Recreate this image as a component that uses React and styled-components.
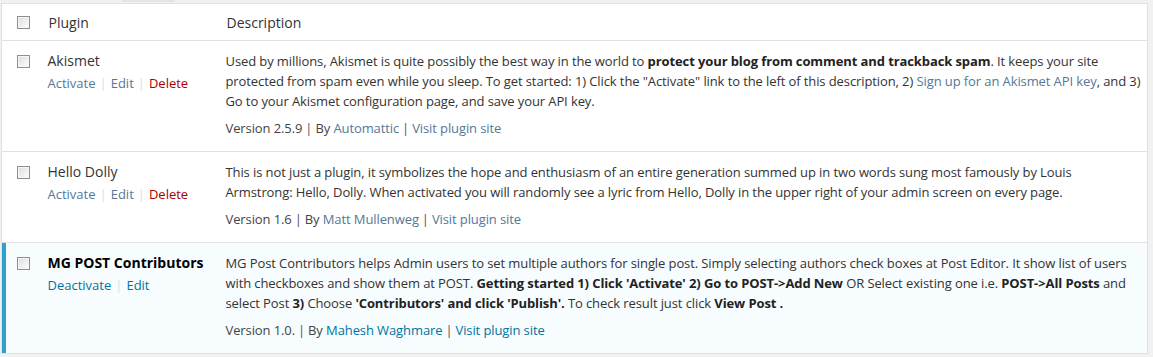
import React from "react";
import styled, { createGlobalStyle } from "styled-components";

const GlobalStyle = createGlobalStyle`
  body {
    margin: 0;
    background: #f1f1f1;
    font-family: "Open Sans", "Liberation Sans", sans-serif;
    color: #444;
  }
`;

const plugins = [
  {
    name: "Akismet",
    active: false,
    actions: ["Activate", "Edit", "Delete"],
    version: "2.5.9",
    author: "Automattic",
    desc: (
      <>
        Used by millions, Akismet is quite possibly the best way in the world to{" "}
        <strong>protect your blog from comment and trackback spam</strong>. It keeps your site
        <br />
        protected from spam even while you sleep. To get started: 1) Click the "Activate" link to
        the left of this description, 2) <a>Sign up for an Akismet API key</a>, and 3)
        <br />
        Go to your Akismet configuration page, and save your API key.
      </>
    ),
  },
  {
    name: "Hello Dolly",
    active: false,
    actions: ["Activate", "Edit", "Delete"],
    version: "1.6",
    author: "Matt Mullenweg",
    desc: (
      <>
        This is not just a plugin, it symbolizes the hope and enthusiasm of an entire generation
        summed up in two words sung most famously by Louis
        <br />
        Armstrong: Hello, Dolly. When activated you will randomly see a lyric from Hello, Dolly in
        the upper right of your admin screen on every page.
      </>
    ),
  },
  {
    name: "MG POST Contributors",
    active: true,
    actions: ["Deactivate", "Edit"],
    version: "1.0.",
    author: "Mahesh Waghmare",
    desc: (
      <>
        MG Post Contributors helps Admin users to set multiple authors for single post. Simply
        selecting authors check boxes at Post Editor. It show list of users
        <br />
        with checkboxes and show them at POST.{" "}
        <strong>Getting started 1) Click 'Activate' 2) Go to POST-&gt;Add New</strong> OR Select
        existing one i.e. <strong>POST-&gt;All Posts</strong> and
        <br />
        select Post <strong>3)</strong> Choose <strong>'Contributors' and click 'Publish'.</strong>{" "}
        To check result just click <strong>View Post .</strong>
      </>
    ),
  },
];

const Page = styled.div`
  display: flex;
  flex-direction: column;
`;

const TopStrip = styled.div`
  height: 3px;
  display: flex;
`;

const TabEdge = styled.div`
  margin-left: 122px;
  width: 53px;
  height: 2px;
  background: #e4e4e4;
`;

const Table = styled.table`
  margin-left: 1px;
  width: 1147px;
  border-collapse: collapse;
  border: 1px solid #e1e1e1;
  background: #fff;
  table-layout: fixed;
`;

const HeadCell = styled.th`
  text-align: left;
  font-weight: 400;
  font-size: 14px;
  color: #333;
  height: 37px;
  padding: 0 10px;
  border-bottom: 1px solid #e1e1e1;
  width: ${(p) => p.$w || "auto"};
  box-sizing: border-box;
`;

const CheckHead = styled.th`
  width: 37px;
  padding: 0 0 0 15px;
  border-bottom: 1px solid #e1e1e1;
  text-align: left;
  vertical-align: middle;
  box-sizing: border-box;
`;

const Row = styled.tr`
  background: ${(p) => (p.$active ? "#f7fcfe" : "#fff")};
  border-bottom: 1px solid #e1e1e1;
`;

const CheckCell = styled.th`
  text-align: left;
  vertical-align: top;
  padding: 14px 0 0 15px;
  box-shadow: ${(p) => (p.$active ? "inset 4px 0 0 #2ea2cc" : "none")};
`;

const Box = styled.span`
  display: block;
  width: 13px;
  height: 13px;
  box-sizing: border-box;
  border: 1px solid #8e8f8f;
  background: linear-gradient(135deg, #dcdcdc 0%, #f4f4f4 70%, #fff 100%);
  box-shadow: inset 0 0 0 1px #f6f6f6;
`;

const TitleCell = styled.td`
  vertical-align: top;
  padding: 10px 10px 10px 9px;
`;

const Name = styled.div`
  font-size: 14px;
  line-height: 20px;
  font-weight: ${(p) => (p.$active ? 700 : 400)};
  color: ${(p) => (p.$active ? "#000" : "#333")};
`;

const Actions = styled.div`
  margin-top: 2px;
  font-size: 13px;
  line-height: 20px;
`;

const ActionLink = styled.a`
  color: ${(p) => (p.$danger ? "#a00" : p.$active ? "#0074a2" : "#557799")};
`;

const Sep = styled.span`
  color: #ddd;
  margin: 0 4px;
`;

const DescCell = styled.td`
  vertical-align: top;
  padding: 10px 8px 13px 9px;
  font-size: 13px;
  line-height: 20px;
  letter-spacing: -0.1px;
  color: #333;
  white-space: nowrap;

  a {
    color: ${(p) => (p.$active ? "#0074a2" : "#557799")};
  }

  strong {
    font-weight: 700;
    color: #222;
  }
`;

const Para = styled.p`
  margin: 0;
`;

const Meta = styled.p`
  margin: 7px 0 0;
  color: #444;
`;

const Pipe = styled.span`
  color: #5a4a5a;
  margin: 0 3px;
`;

export default function App() {
  return (
    <>
      <GlobalStyle />
      <Page>
        <TopStrip>
          <TabEdge />
        </TopStrip>
        <Table>
          <thead>
            <tr>
              <CheckHead>
                <Box />
              </CheckHead>
              <HeadCell $w="178px">Plugin</HeadCell>
              <HeadCell>Description</HeadCell>
            </tr>
          </thead>
          <tbody>
            {plugins.map((p) => (
              <Row key={p.name} $active={p.active}>
                <CheckCell $active={p.active}>
                  <Box />
                </CheckCell>
                <TitleCell>
                  <Name $active={p.active}>{p.name}</Name>
                  <Actions>
                    {p.actions.map((a, i) => (
                      <React.Fragment key={a}>
                        {i > 0 && <Sep>|</Sep>}
                        <ActionLink $active={p.active} $danger={a === "Delete"}>
                          {a}
                        </ActionLink>
                      </React.Fragment>
                    ))}
                  </Actions>
                </TitleCell>
                <DescCell $active={p.active}>
                  <Para>{p.desc}</Para>
                  <Meta>
                    Version {p.version}
                    <Pipe>|</Pipe>By <a>{p.author}</a>
                    <Pipe>|</Pipe>
                    <a>Visit plugin site</a>
                  </Meta>
                </DescCell>
              </Row>
            ))}
          </tbody>
        </Table>
      </Page>
    </>
  );
}
